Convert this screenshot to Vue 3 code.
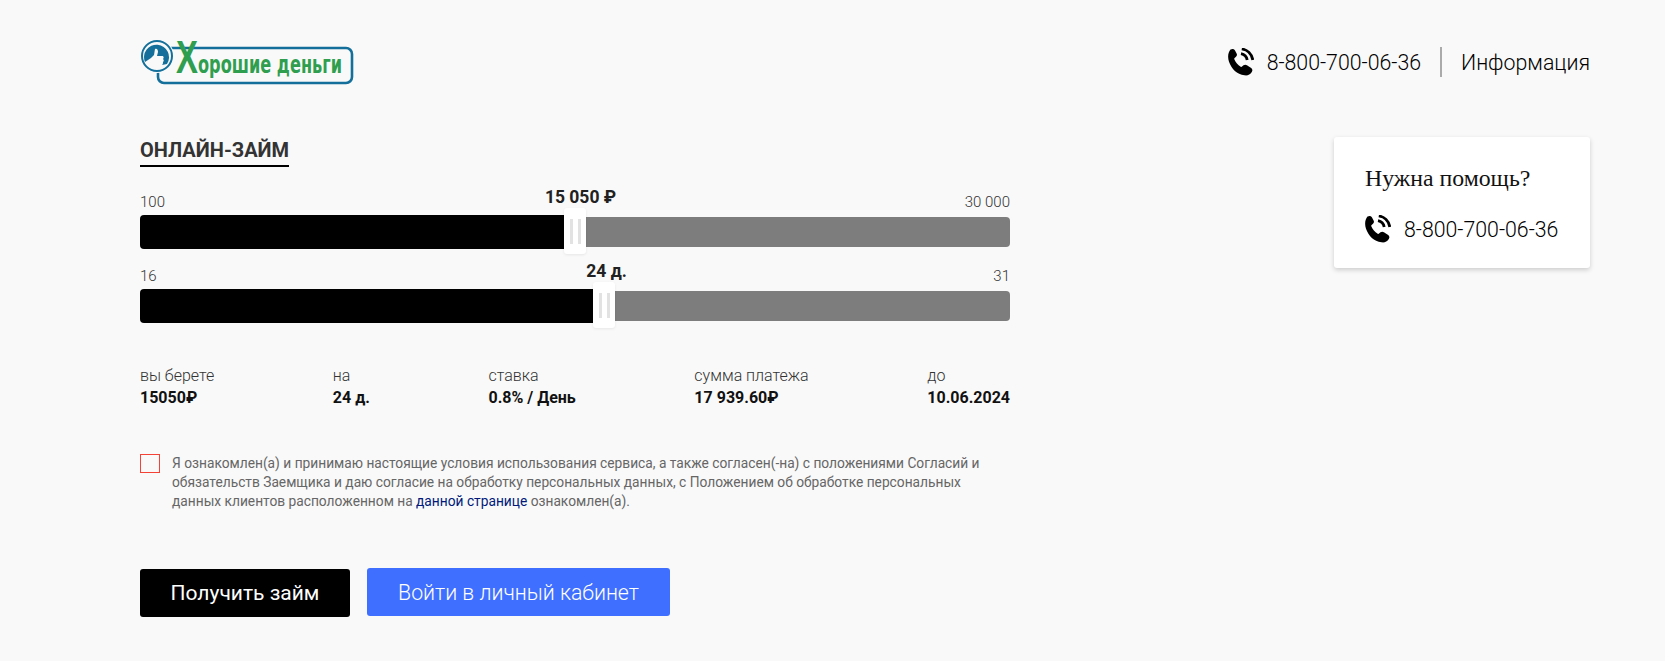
<template>
  <div class="page">
    <header class="header">
      <svg class="logo" width="215" height="50" viewBox="0 0 215 50">
        <rect x="18" y="10" width="194" height="35" rx="6" fill="none" stroke="#14709a" stroke-width="2.6" />
        <circle cx="17" cy="18" r="17" fill="#f9f9f9" />
        <circle cx="17" cy="18" r="15" fill="#f9f9f9" stroke="#14709a" stroke-width="2" />
        <path d="M5 24A12.500 12.500 0 1 1 27 26L22 27c1-1 1-2 1-3 1-1 1-2 0-3 1-1 1-3-1-3h-5l1-4c0-2-1-4-3-3l-1 6-3 3z" fill="#14709a" />
        <text transform="translate(36 35) scale(.716 1)" class="logo-x">Х</text>
        <text transform="translate(58 35) scale(.674 1)" class="logo-text">орошие деньги</text>
      </svg>
      <div class="contacts">
        <svg class="phone" width="26" height="28" viewBox="0 0 26 28">
          <use href="#phone-icon" />
        </svg>
        <span class="contact-num">8-800-700-06-36</span>
        <span class="divider"></span>
        <span class="contact-info">Информация</span>
      </div>
    </header>

    <svg width="0" height="0" class="defs">
      <defs>
        <g id="phone-icon">
          <path d="M2.500 1.600C4.400.4 6 .8 7 2.400l1.600 3c.7 1.300.4 2.500-.6 3.300L6.600 9.900c-.4.4-.5.8-.3 1.300 1.300 3.200 3.500 5.700 6.400 7.500.4.3.9.3 1.300-.1l1.500-1.300c1-.8 2.300-.9 3.400-.1l3.900 2.500c1.700 1.100 2 2.700 1 4.200-1.600 2.600-4.200 4-7.400 3.400C9 26.500 3.500 21 1 13.800-.6 9 .1 4.400 2.500 1.600z" fill="#000" />
          <path d="M13 5.600c3.200.6 5.600 3 6.200 6.400M13.800.9c5.600.9 10 5.200 11 11" fill="none" stroke="#000" stroke-width="2.800" />
        </g>
      </defs>
    </svg>

    <main class="main">
      <section class="calc">
        <h1 class="title">ОНЛАЙН-ЗАЙМ</h1>

        <div v-for="s in sliders" :key="s.min" class="slider">
          <div class="range">
            <span>{{ s.minLabel }}</span>
            <span>{{ s.maxLabel }}</span>
          </div>
          <div class="track">
            <div class="fill" :style="{ width: percent(s) + '%' }"></div>
            <div class="rest"></div>
            <div class="value" :style="{ left: `calc(${percent(s)}% + ${s.shift}px)` }">{{ s.label }}</div>
            <div class="thumb" :style="{ left: percent(s) + '%' }">
              <i></i><i></i>
            </div>
          </div>
        </div>

        <div class="stats">
          <div v-for="st in stats" :key="st.name" class="stat">
            <div class="stat-name">{{ st.name }}</div>
            <div class="stat-val">{{ st.value }}</div>
          </div>
        </div>

        <div class="agree">
          <span class="check"></span>
          <p>
            Я ознакомлен(а) и принимаю настоящие условия использования сервиса, а также согласен(-на) с положениями Согласий и
            обязательств Заемщика и даю согласие на обработку персональных данных, с Положением об обработке персональных
            данных клиентов расположенном на <a href="#">данной странице</a> ознакомлен(а).
          </p>
        </div>

        <div class="buttons">
          <button class="btn btn-black">Получить займ</button>
          <button class="btn btn-blue">Войти в личный кабинет</button>
        </div>
      </section>

      <aside class="help">
        <div class="help-title">Нужна помощь?</div>
        <div class="help-phone">
          <svg class="phone" width="26" height="28" viewBox="0 0 26 28">
            <use href="#phone-icon" />
          </svg>
          <span>8-800-700-06-36</span>
        </div>
      </aside>
    </main>
  </div>
</template>

<script setup>
const sliders = [
  { min: 100, max: 30000, val: 15050, minLabel: '100', maxLabel: '30 000', label: '15 050 ₽', shift: 5.5 },
  { min: 16, max: 31, val: 24, minLabel: '16', maxLabel: '31', label: '24 д.', shift: 2.5 }
]

const stats = [
  { name: 'вы берете', value: '15050₽' },
  { name: 'на', value: '24 д.' },
  { name: 'ставка', value: '0.8% / День' },
  { name: 'сумма платежа', value: '17 939.60₽' },
  { name: 'до', value: '10.06.2024' }
]

function percent(s) {
  return ((s.val - s.min) / (s.max - s.min)) * 100
}
</script>

<style>
html,
body {
  background: #f9f9f9;
}
</style>

<style scoped>
.page {
  box-sizing: border-box;
  width: 1665px;
  height: 661px;
  padding: 38px 75px 0 140px;
  background: #f9f9f9;
  font-family: Roboto, sans-serif;
  color: #212121;
  overflow: hidden;
}

.defs {
  position: absolute;
}

.header {
  display: flex;
  justify-content: space-between;
  height: 50px;
}

.logo {
  display: block;
}

.logo-x {
  font-family: "Liberation Sans", sans-serif;
  font-weight: 700;
  font-size: 46px;
  fill: #2f9e4f;
}

.logo-text {
  font-family: "DejaVu Sans", sans-serif;
  font-weight: 700;
  font-size: 24px;
  fill: #2f9e4f;
}

.contacts {
  display: flex;
  align-items: center;
  height: 48px;
  font-size: 21.3px;
  font-weight: 300;
  color: #000;
}

.phone {
  display: block;
  flex: none;
}

.contact-num {
  margin-left: 13px;
}

.divider {
  width: 2px;
  height: 30px;
  margin: 0 19px 0 19px;
  background: #aaa;
}

.main {
  display: flex;
  justify-content: space-between;
  align-items: flex-start;
  padding-top: 49px;
}

.calc {
  width: 870px;
}

.title {
  display: inline-block;
  margin: 0;
  padding-bottom: 1px;
  border-bottom: 2px solid #000;
  font-size: 20px;
  line-height: 27px;
  font-weight: 700;
  color: #333;
}

.slider {
  margin-top: 26px;
}

.slider + .slider {
  margin-top: 18px;
}

.range {
  display: flex;
  justify-content: space-between;
  height: 18px;
  margin-bottom: 4px;
  font-size: 15px;
  line-height: 18px;
  font-weight: 300;
  color: #333;
}

.track {
  position: relative;
  display: flex;
  align-items: center;
  height: 34px;
}

.fill {
  height: 34px;
  background: #000;
  border-radius: 4px 0 0 4px;
}

.rest {
  flex: 1;
  height: 30px;
  background: #7d7d7d;
  border-radius: 0 4px 4px 0;
}

.thumb {
  position: absolute;
  top: -7px;
  display: flex;
  justify-content: center;
  gap: 5px;
  box-sizing: border-box;
  width: 22px;
  height: 46px;
  padding-top: 11px;
  margin-left: -11px;
  background: #fff;
  border-radius: 3px;
  box-shadow: 0 1px 3px rgba(0, 0, 0, 0.08);
}

.thumb i {
  width: 3px;
  height: 25px;
  background: #e2e2e2;
}

.value {
  position: absolute;
  top: -30px;
  transform: translateX(-50%);
  font-size: 17.5px;
  line-height: 24px;
  font-weight: 700;
  white-space: nowrap;
  color: #212121;
}

.stats {
  display: flex;
  justify-content: space-between;
  margin-top: 42px;
}

.stat-name {
  font-size: 16px;
  line-height: 21px;
  font-weight: 300;
  color: #333;
}

.stat-val {
  font-size: 16px;
  line-height: 23px;
  font-weight: 700;
  color: #111;
}

.agree {
  display: flex;
  margin-top: 45px;
}

.check {
  flex: none;
  box-sizing: border-box;
  width: 20px;
  height: 19px;
  margin-right: 12px;
  border: 1px solid #f44336;
}

.agree p {
  margin: 0;
  padding-right: 10px;
  font-size: 13.75px;
  line-height: 19px;
  color: #666;
}

.agree a {
  color: #00197a;
  text-decoration: none;
}

.buttons {
  display: flex;
  align-items: flex-start;
  gap: 17px;
  margin-top: 57px;
}

.btn {
  height: 48px;
  border: 0;
  border-radius: 3px;
  font-family: Roboto, sans-serif;
  color: #fff;
}

.btn-black {
  width: 210px;
  margin-top: 1px;
  background: #000;
  font-size: 21px;
  font-weight: 400;
}

.btn-blue {
  width: 303px;
  background: #3f6fff;
  font-size: 21.3px;
  font-weight: 300;
}

.help {
  box-sizing: border-box;
  width: 256px;
  height: 131px;
  padding: 28px 20px 28px 31px;
  background: #fff;
  border-radius: 3px;
  box-shadow: 0 2px 5px rgba(0, 0, 0, 0.18);
}

.help-title {
  font-family: "Liberation Serif", serif;
  font-size: 23.8px;
  line-height: 26px;
  color: #111;
}

.help-phone {
  display: flex;
  align-items: center;
  gap: 13px;
  margin-top: 24px;
  font-size: 21.3px;
  font-weight: 300;
  white-space: nowrap;
  color: #000;
}
</style>
